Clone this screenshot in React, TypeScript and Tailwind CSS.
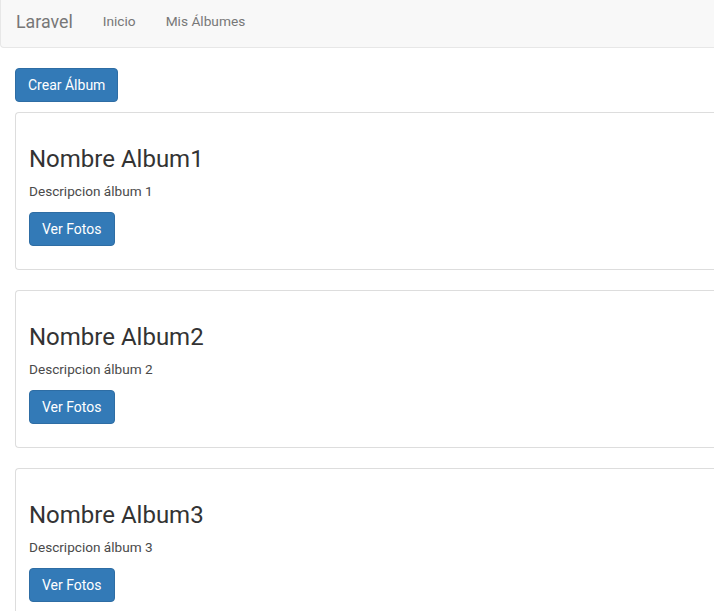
import React from 'react';

const albums = [
	{ name: 'Nombre Album1', description: 'Descripcion álbum 1' },
	{ name: 'Nombre Album2', description: 'Descripcion álbum 2' },
	{ name: 'Nombre Album3', description: 'Descripcion álbum 3' },
];

function BlueButton({ children }: { children: React.ReactNode }) {
	return (
		<button className="inline-block h-[34px] rounded-[4px] border border-[#2e6da4] bg-[#337ab7] px-[12px] text-[14px] leading-[20px] text-white">
			{children}
		</button>
	);
}

export default function App() {
	return (
		<div className="w-[714px] overflow-hidden bg-white font-['Roboto',_'Liberation_Sans',_sans-serif] text-[14px] text-[#333]">
			<nav className="flex h-[48px] items-center rounded-bl-[4px] border-b border-l border-[#e7e7e7] bg-[#f8f8f8] pb-[2px]">
				<a className="px-[15px] text-[17.8px] text-[#777]">Laravel</a>
				<a className="px-[15px] pb-[3px] text-[13.7px] text-[#777]">Inicio</a>
				<a className="px-[15px] pb-[3px] text-[13.7px] text-[#777]">Mis Álbumes</a>
			</nav>

			<main className="pl-[15px] pt-[20px]">
				<div className="mb-[10px]">
					<BlueButton>Crear Álbum</BlueButton>
				</div>

				{albums.map((album) => (
					<div
						key={album.name}
						className="mb-[20px] rounded-l-[4px] border border-r-0 border-[#ddd] px-[13px] pt-[13px] pb-[13px]"
					>
						<h3 className="mt-[20px] mb-[10px] text-[24px] leading-[26.4px] font-normal">
							{album.name}
						</h3>
						<p className="mb-[11px] text-[13.6px] leading-[18.5px] text-[#4a4a4a]">
							{album.description}
						</p>
						<p className="mb-[10px]">
							<BlueButton>Ver Fotos</BlueButton>
						</p>
					</div>
				))}
			</main>
		</div>
	);
}
